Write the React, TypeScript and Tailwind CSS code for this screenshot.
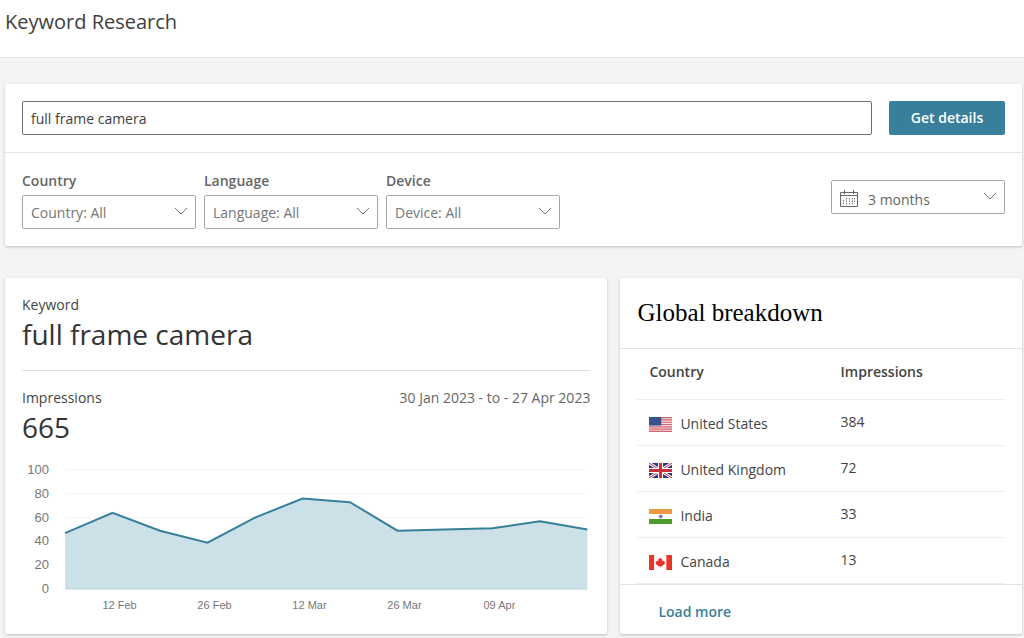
import type { ReactNode } from "react";

const weeklyImpressions = [47, 64, 49, 39, 60, 76, 73, 49, 50, 51, 57, 50];
const dateTicks = ["12 Feb", "26 Feb", "12 Mar", "26 Mar", "09 Apr"];
const valueTicks = [100, 80, 60, 40, 20, 0];

const plot = { left: 43, right: 565, top: 10, bottom: 129 };

const xAt = (i: number) =>
  plot.left + (i * (plot.right - plot.left)) / (weeklyImpressions.length - 1);
const yAt = (value: number) => plot.bottom - (value * (plot.bottom - plot.top)) / 100;

function ImpressionsChart() {
  const line = weeklyImpressions.map((v, i) => `${xAt(i)},${yAt(v)}`).join(" ");

  return (
    <svg
      viewBox="0 0 568 157"
      className="mt-3.5 block w-full font-['Liberation_Sans',Arial,sans-serif]"
      role="img"
      aria-label="Impressions per week"
    >
      {valueTicks.map((v) => (
        <g key={v}>
          <line x1={plot.left} x2={plot.right} y1={yAt(v)} y2={yAt(v)} stroke="#f5f5f5" />
          <text x="27" y={yAt(v) + 4} textAnchor="end" fontSize="13" fill="#777777">
            {v}
          </text>
        </g>
      ))}
      <polygon
        points={`${plot.left},${plot.bottom} ${line} ${plot.right},${plot.bottom}`}
        fill="#cbe1e7"
      />
      <line x1={plot.left} x2={plot.right} y1={plot.bottom} y2={plot.bottom} stroke="#c0d5de" />
      <polyline points={line} fill="none" stroke="#377f9b" strokeWidth="2" />
      {dateTicks.map((label, i) => (
        <text
          key={label}
          x={xAt(i * 2 + 1) + 7}
          y="149"
          textAnchor="middle"
          fontSize="11"
          fill="#777777"
        >
          {label}
        </text>
      ))}
    </svg>
  );
}

function Chevron() {
  return (
    <svg
      viewBox="0 0 14 8"
      className="pointer-events-none absolute right-2 top-3 h-2 w-3.5"
      fill="none"
      stroke="#777777"
      aria-hidden="true"
    >
      <path d="M1 1l6 6 6-6" />
    </svg>
  );
}

function CalendarIcon() {
  return (
    <svg
      viewBox="0 0 18 18"
      className="pointer-events-none absolute left-[9px] top-2.5 size-[18px]"
      fill="none"
      stroke="#666666"
      aria-hidden="true"
    >
      <path d="M.5 2.5h17v14H.5zM.5 5.5h17M4.5 0v4M13.5 0v4" />
      <path
        d="M6.5 8v7M9.5 8v7M12.5 8v7M3.5 10v5M14.5 8v5"
        strokeDasharray="1.5 1"
        stroke="#808080"
      />
    </svg>
  );
}

function Filter({ id, label, options }: { id: string; label: string; options: string[] }) {
  return (
    <div className="w-[174px]">
      <label htmlFor={id} className="block text-sm leading-5 font-semibold text-[#666666]">
        {label}
      </label>
      <div className="relative mt-1">
        <select
          id={id}
          className="block h-[34px] w-full appearance-none rounded-xs border border-[#a6a6a6] bg-white px-2 pt-0.5 text-sm text-[#767676]"
        >
          {options.map((o) => (
            <option key={o}>{o}</option>
          ))}
        </select>
        <Chevron />
      </div>
    </div>
  );
}

function Flag({ children }: { children: ReactNode }) {
  return (
    <svg
      viewBox="0 0 45 30"
      className="h-[15px] w-[23px] shrink-0"
      preserveAspectRatio="none"
      aria-hidden="true"
    >
      {children}
    </svg>
  );
}

const usFlag = (
  <Flag>
    <path fill="#f6dde0" d="M0 0h45v30H0z" />
    <path
      stroke="#cf6470"
      strokeWidth="2.3"
      d="M0 1.15h45M0 5.75h45M0 10.4h45M0 15h45M0 19.6h45M0 24.2h45M0 28.85h45"
    />
    <path fill="#37508b" d="M0 0h24v17H0z" />
    <path stroke="#4f669b" strokeDasharray="1 3" d="M2 3h20M4 6h18M2 9h20M4 12h18" />
  </Flag>
);

const ukFlag = (
  <Flag>
    <path fill="#26338f" d="M0 0h45v30H0z" />
    <path stroke="#fff" strokeWidth="6" d="M0 0l45 30M45 0L0 30" />
    <path stroke="#c8323c" strokeWidth="2" d="M0 0l45 30M45 0L0 30" />
    <path stroke="#fff" strokeWidth="10" d="M22.5 0v30M0 15h45" />
    <path stroke="#c8323c" strokeWidth="6" d="M22.5 0v30M0 15h45" />
  </Flag>
);

const indiaFlag = (
  <Flag>
    <path fill="#fff" d="M0 0h45v30H0z" />
    <path fill="#ea9a45" d="M0 0h45v10H0z" />
    <path fill="#519b2d" d="M0 20h45v10H0z" />
    <circle cx="23" cy="15" r="3.5" fill="#8f8fcb" stroke="#7777bb" />
    <circle cx="23" cy="15" r="1.2" fill="#5555aa" />
  </Flag>
);

const canadaFlag = (
  <Flag>
    <path fill="#fff" d="M0 0h45v30H0z" />
    <path fill="#e93526" d="M0 0h10v30H0zM34 0h11v30H34z" />
    <path
      fill="#e93526"
      d="M22 5l-2 3-2-.5.8 4.5-2.8-1.5-.5 2-3 .5 1.5 3-1.5 1.5 5.500 4-.5 1.500 4-.5v3h1v-3l4 .5-.5-1.500 5.500-4-1.500-1.500 1.500-3-3-.5-.5-2-2.800 1.500.8-4.500-2 .5z"
    />
  </Flag>
);

const countries = [
  { name: "United States", flag: usFlag, impressions: 384 },
  { name: "United Kingdom", flag: ukFlag, impressions: 72 },
  { name: "India", flag: indiaFlag, impressions: 33 },
  { name: "Canada", flag: canadaFlag, impressions: 13 },
];

const card = "rounded-xs bg-white shadow-[0_1px_3px_rgba(0,0,0,0.22)]";

export default function App() {
  return (
    <div className="min-h-screen bg-[#f4f4f4] font-['Open_Sans','Segoe_UI',sans-serif] text-sm text-[#444444]">
      <header className="border-b border-[#e2e2e2] bg-white px-[5px] pt-2 pb-[21px]">
        <h1 className="text-xl leading-7 text-[#404040]">Keyword Research</h1>
      </header>

      <main className="pt-[26px] pr-0.5 pb-1 pl-[5px]">
        <form className={card} onSubmit={(e) => e.preventDefault()}>
          <div className="flex gap-[17px] border-b border-[#e5e5e5] p-[17px]">
            <input
              type="text"
              aria-label="Keyword"
              defaultValue="full frame camera"
              className="h-[34px] min-w-0 flex-1 rounded-xs border border-[#707070] px-2 text-sm text-[#404040]"
            />
            <button
              type="submit"
              className="h-[34px] w-[116px] rounded-xs bg-[#377f9b] text-sm font-semibold text-white"
            >
              Get details
            </button>
          </div>
          <div className="flex items-start justify-between px-[17px] pt-[18px] pb-[17px]">
            <div className="flex gap-2">
              <Filter id="country" label="Country" options={["Country: All"]} />
              <Filter id="language" label="Language" options={["Language: All"]} />
              <Filter id="device" label="Device" options={["Device: All"]} />
            </div>
            <div className="relative mt-[9px] w-[174px]">
              <CalendarIcon />
              <select
                aria-label="Date range"
                className="block h-[34px] w-full appearance-none rounded-xs border border-[#a6a6a6] pt-1.5 pl-9 text-sm text-[#666666]"
              >
                <option>3 months</option>
              </select>
              <Chevron />
            </div>
          </div>
        </form>

        <div className="mt-8 grid grid-cols-[3fr_2fr] gap-[13px]">
          <section className={`${card} px-[17px] pt-[17px] pb-4`}>
            <p className="leading-5">Keyword</p>
            <h2 className="text-[28px] leading-[38px] text-[#333333]">full frame camera</h2>
            <div className="mt-[17px] flex justify-between border-t border-[#dddddd] pt-[17px] leading-5">
              <span>Impressions</span>
              <span className="text-[#666666]">30 Jan 2023 - to - 27 Apr 2023</span>
            </div>
            <p className="text-[28px] leading-[38px] text-[#333333]">665</p>
            <ImpressionsChart />
          </section>

          <section className={card}>
            <h2 className="border-b border-[#e2e2e2] px-[17px] py-[19px] font-['Liberation_Serif','Times_New_Roman',serif] text-[25px] leading-8 text-black">
              Global breakdown
            </h2>
            <div className="px-[17px]">
              <table className="w-full table-fixed text-left">
                <thead>
                  <tr className="h-[50px] border-b border-[#eeeeee]">
                    <th className="w-[52%] pb-1 pl-3 font-semibold">Country</th>
                    <th className="pb-1 pl-3 font-semibold">Impressions</th>
                  </tr>
                </thead>
                <tbody>
                  {countries.map((c) => (
                    <tr key={c.name} className="h-[46px] border-b border-[#eeeeee]">
                      <td className="pt-1 pl-3">
                        <div className="flex items-center gap-2">
                          {c.flag}
                          {c.name}
                        </div>
                      </td>
                      <td className="pl-3">{c.impressions}</td>
                    </tr>
                  ))}
                </tbody>
              </table>
            </div>
            <div className="border-t border-[#e2e2e2] px-[38px] pt-[17px] pb-3">
              <a href="#more" className="leading-5 font-semibold text-[#377f9b]">
                Load more
              </a>
            </div>
          </section>
        </div>
      </main>
    </div>
  );
}
